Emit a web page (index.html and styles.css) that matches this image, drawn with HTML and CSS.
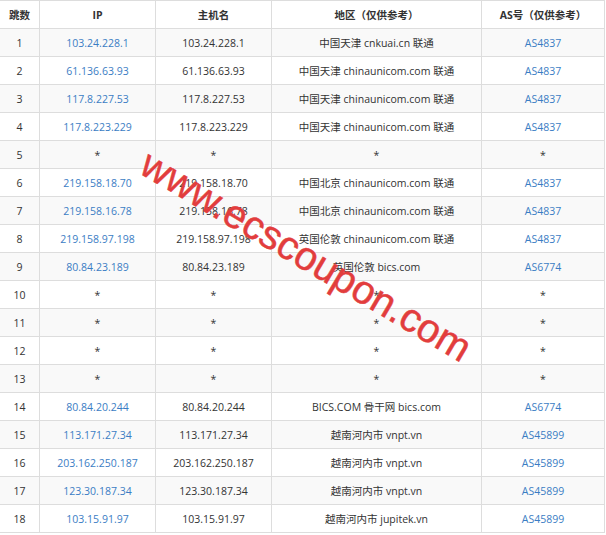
FILE: index.html
```html
<!DOCTYPE html>
<html lang="zh-CN">
<head>
<meta charset="utf-8">
<title>路由追踪</title>
<link rel="stylesheet" href="styles.css">
</head>
<body>
<div class="page">
  <div class="trace">
    <div class="cell head">跳数</div><div class="cell head">IP</div><div class="cell head">主机名</div><div class="cell head">地区（仅供参考）</div><div class="cell head">AS号（仅供参考）</div>

    <div class="cell odd">1</div><div class="cell odd link">103.24.228.1</div><div class="cell odd">103.24.228.1</div><div class="cell odd">中国天津 cnkuai.cn 联通</div><div class="cell odd link">AS4837</div>
    <div class="cell">2</div><div class="cell link">61.136.63.93</div><div class="cell">61.136.63.93</div><div class="cell">中国天津 chinaunicom.com 联通</div><div class="cell link">AS4837</div>
    <div class="cell odd">3</div><div class="cell odd link">117.8.227.53</div><div class="cell odd">117.8.227.53</div><div class="cell odd">中国天津 chinaunicom.com 联通</div><div class="cell odd link">AS4837</div>
    <div class="cell">4</div><div class="cell link">117.8.223.229</div><div class="cell">117.8.223.229</div><div class="cell">中国天津 chinaunicom.com 联通</div><div class="cell link">AS4837</div>
    <div class="cell odd">5</div><div class="cell odd">*</div><div class="cell odd">*</div><div class="cell odd">*</div><div class="cell odd">*</div>
    <div class="cell">6</div><div class="cell link">219.158.18.70</div><div class="cell">219.158.18.70</div><div class="cell">中国北京 chinaunicom.com 联通</div><div class="cell link">AS4837</div>
    <div class="cell odd">7</div><div class="cell odd link">219.158.16.78</div><div class="cell odd">219.158.16.78</div><div class="cell odd">中国北京 chinaunicom.com 联通</div><div class="cell odd link">AS4837</div>
    <div class="cell">8</div><div class="cell link">219.158.97.198</div><div class="cell">219.158.97.198</div><div class="cell">英国伦敦 chinaunicom.com 联通</div><div class="cell link">AS4837</div>
    <div class="cell odd">9</div><div class="cell odd link">80.84.23.189</div><div class="cell odd">80.84.23.189</div><div class="cell odd">英国伦敦 bics.com</div><div class="cell odd link">AS6774</div>
    <div class="cell">10</div><div class="cell">*</div><div class="cell">*</div><div class="cell">*</div><div class="cell">*</div>
    <div class="cell odd">11</div><div class="cell odd">*</div><div class="cell odd">*</div><div class="cell odd">*</div><div class="cell odd">*</div>
    <div class="cell">12</div><div class="cell">*</div><div class="cell">*</div><div class="cell">*</div><div class="cell">*</div>
    <div class="cell odd">13</div><div class="cell odd">*</div><div class="cell odd">*</div><div class="cell odd">*</div><div class="cell odd">*</div>
    <div class="cell">14</div><div class="cell link">80.84.20.244</div><div class="cell">80.84.20.244</div><div class="cell">BICS.COM 骨干网 bics.com</div><div class="cell link">AS6774</div>
    <div class="cell odd">15</div><div class="cell odd link">113.171.27.34</div><div class="cell odd">113.171.27.34</div><div class="cell odd">越南河内市 vnpt.vn</div><div class="cell odd link">AS45899</div>
    <div class="cell">16</div><div class="cell link">203.162.250.187</div><div class="cell">203.162.250.187</div><div class="cell">越南河内市 vnpt.vn</div><div class="cell link">AS45899</div>
    <div class="cell odd">17</div><div class="cell odd link">123.30.187.34</div><div class="cell odd">123.30.187.34</div><div class="cell odd">越南河内市 vnpt.vn</div><div class="cell odd link">AS45899</div>
    <div class="cell">18</div><div class="cell link">103.15.91.97</div><div class="cell">103.15.91.97</div><div class="cell">越南河内市 jupitek.vn</div><div class="cell link">AS45899</div>
  </div>
  <span class="watermark">www.ecscoupon.com</span>
</div>
</body>
</html>
```

FILE: styles.css
```css
html, body {
  margin: 0;
  padding: 0;
  background: #ffffff;
}

.page {
  position: relative;
  width: 606px;
  height: 535px;
  overflow: hidden;
}

.trace {
  display: grid;
  grid-template-columns: 40px 116px 116px 210px 123px;
  grid-auto-rows: 28px;
  margin-left: -1px;
  width: 605px;
  border-top: 1px solid #dddddd;
  border-left: 1px solid #dddddd;
  font-family: "Open Sans", "Noto Sans CJK SC", sans-serif;
  font-size: 10.5px;
  color: #333333;
}

.cell {
  box-sizing: border-box;
  display: flex;
  align-items: center;
  justify-content: center;
  border-right: 1px solid #dddddd;
  border-bottom: 1px solid #dddddd;
  white-space: nowrap;
  background: #ffffff;
}

.head {
  font-weight: bold;
}

.odd {
  background: #f9f9f9;
}

.link {
  color: #3b7dc4;
}

.watermark {
  position: absolute;
  left: 137px;
  top: 138px;
  transform-origin: 0 35px;
  transform: rotate(30.5deg);
  font-family: "Liberation Sans", Arial, sans-serif;
  font-size: 40px;
  line-height: 1;
  color: #e23d3d;
  -webkit-text-stroke: 0.5px #e23d3d;
  white-space: nowrap;
}
```
